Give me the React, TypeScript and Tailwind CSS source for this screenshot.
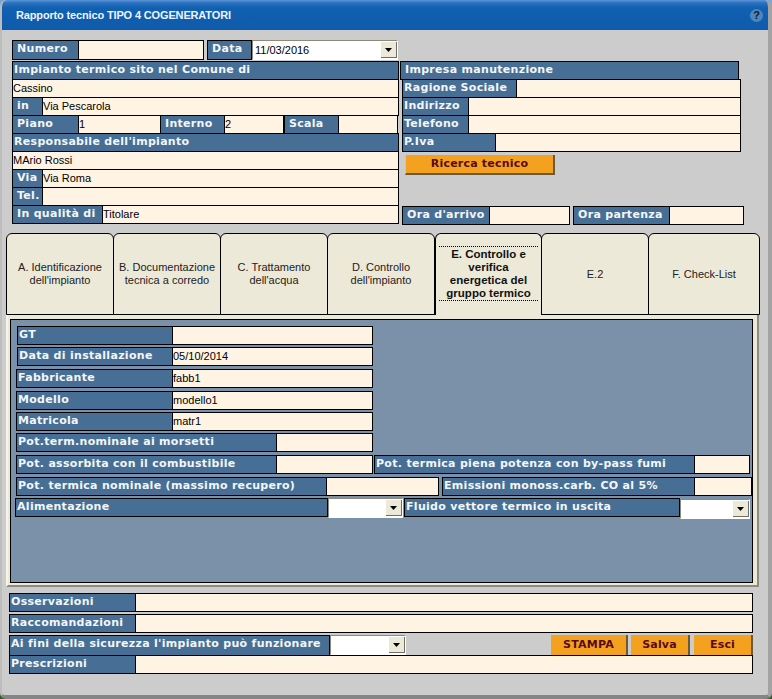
import React from "react";

const LBL = "font-['DejaVu_Sans',sans-serif] font-bold text-[11px] tracking-[0.3px] leading-[14px] text-[#f4f6f8]";

function Label({ w, children, className = "" }: { w?: string; children: React.ReactNode; className?: string }) {
  return (
    <div className={`h-full shrink-0 border border-black bg-[#476f95] pl-px pt-px whitespace-nowrap overflow-hidden ${LBL} ${w ?? ""} ${className}`}>
      {children}
    </div>
  );
}

function Input({ w, children, className = "" }: { w?: string; children?: React.ReactNode; className?: string }) {
  return (
    <div className={`h-full -ml-px border border-black bg-[#fff3e4] flex items-center whitespace-nowrap overflow-hidden font-['Liberation_Sans',sans-serif] text-[11px] text-black ${w ?? "flex-1"} ${className}`}>
      {children}
    </div>
  );
}

function Select({ w, value, className = "" }: { w: string; value?: string; className?: string }) {
  return (
    <div className={`relative shrink-0 h-[20px] border-t border-l border-t-[#8d8a78] border-l-[#8d8a78] border-b border-r border-b-white border-r-white bg-white flex items-center pl-[2px] font-['Liberation_Sans',sans-serif] text-[11px] text-black ${w} ${className}`}>
      {value}
      <div className="absolute right-0 top-px bottom-px w-[16px] bg-[#ece9d8] border-r border-b border-r-[#716f64] border-b-[#716f64] flex items-center justify-center">
        <svg width="7" height="4" viewBox="0 0 7 4"><path d="M0 0h7L3.5 4z" fill="#000" /></svg>
      </div>
    </div>
  );
}

function Btn({ w, children, className = "" }: { w: string; children: React.ReactNode; className?: string }) {
  return (
    <div className={`shrink-0 flex items-center justify-center pt-px bg-[#f3a11f] border-r-2 border-r-[#6b5a3a] font-['DejaVu_Sans',sans-serif] font-bold text-[11px] tracking-[0.2px] text-[#5a0a14] ${w} ${className}`}>
      {children}
    </div>
  );
}

function Row({ children, className = "" }: { children: React.ReactNode; className?: string }) {
  return <div className={`flex h-[19px] ${className}`}>{children}</div>;
}

function Tab({ w, children }: { w: string; children: React.ReactNode }) {
  return (
    <div className={`h-[82px] -mr-px shrink-0 rounded-t-[6px] border border-black bg-[#ece9d8] flex items-center justify-center text-center font-['Liberation_Sans',sans-serif] text-[11px] leading-[13px] text-[#222] ${w}`}>
      <div>{children}</div>
    </div>
  );
}

export default function App() {
  return (
    <div className="w-[772px] h-[699px] overflow-hidden bg-[linear-gradient(to_bottom,#7ba7d8_0,#7ba7d8_50%,#2f5a26_50%,#2f5a26_100%)]">
      <div className="w-[772px] h-[699px] flex flex-col rounded-t-[7px] rounded-b-[6px] overflow-hidden bg-[#cccccc] border-r-[4px] border-r-[#a3a3a3] border-b-[4px] border-b-[#858585] border-l-[2px] border-l-[#bdbdbd]">
        {/* Title bar */}
        <div className="h-[30px] -ml-[2px] -mr-[4px] shrink-0 flex items-center justify-between pl-[16px] pr-[9px] bg-[linear-gradient(to_bottom,#5b94d6_0,#2a72c0_3px,#1160b2_8px,#0f5aab_100%)]">
          <span className="font-['Liberation_Sans',sans-serif] font-bold text-[11px] tracking-[-0.15px] text-[#eef3fa]">Rapporto tecnico TIPO 4 COGENERATORI</span>
          <div className="w-[13px] h-[13px] rounded-full bg-[#4f86bb] flex items-center justify-center font-['Liberation_Sans',sans-serif] font-bold text-[11px] leading-none text-[#0b1a30]">?</div>
        </div>

        {/* Upper form */}
        <div className="pl-[10px] pt-[10px]">
          <Row className="h-[20px]">
            <Label w="w-[67px]" className="!pl-[4px]">Numero</Label>
            <Input w="w-[126px]" />
            <Label w="w-[45px]" className="ml-[3px] !pl-[4px]">Data</Label>
            <Select w="w-[146px]" value="11/03/2016" />
          </Row>
          <div className="flex mt-[1px]">
            <div className="w-[387px] shrink-0">
              <Row><Label w="w-full">Impianto termico sito nel Comune di</Label></Row>
              <Row className="-mt-px"><Input className="ml-0">Cassino</Input></Row>
              <Row className="-mt-px"><Label w="w-[31px]" className="!pl-[4px]">in</Label><Input>Via Pescarola</Input></Row>
              <Row className="-mt-px w-[386px]">
                <Label w="w-[67px]" className="!pl-[4px]">Piano</Label>
                <Input w="w-[83px]">1</Input>
                <Label w="w-[65px]" className="-ml-px !pl-[4px]">Interno</Label>
                <Input w="w-[60px]">2</Input>
                <Label w="w-[55px]" className="!pl-[4px]">Scala</Label>
                <Input w="w-[60px]" />
              </Row>
              <Row className="-mt-px"><Label w="w-full">Responsabile dell'impianto</Label></Row>
              <Row className="-mt-px"><Input className="ml-0">MArio Rossi</Input></Row>
              <Row className="-mt-px"><Label w="w-[31px]" className="!pl-[4px]">Via</Label><Input>Via Roma</Input></Row>
              <Row className="-mt-px"><Label w="w-[31px]" className="!pl-[4px]">Tel.</Label><Input /></Row>
              <Row className="-mt-px"><Label w="w-[91px]" className="!pl-[4px]">In qualità di</Label><Input>Titolare</Input></Row>
            </div>
            <div className="w-[345px] shrink-0 ml-[2px]">
              <Row className="-ml-px"><Label w="w-[339px]" className="!pl-[4px]">Impresa manutenzione</Label></Row>
              <div className="ml-[1px]">
                <Row className="-mt-px w-[339px]"><Label w="w-[115px]">Ragione Sociale</Label><Input /></Row>
                <Row className="-mt-px w-[339px]"><Label w="w-[67px]">Indirizzo</Label><Input /></Row>
                <Row className="-mt-px w-[339px]"><Label w="w-[67px]">Telefono</Label><Input /></Row>
                <Row className="-mt-px w-[339px]"><Label w="w-[94px]">P.Iva</Label><Input /></Row>
                <Btn w="w-[150px] h-[20px] mt-[3px] ml-[3px] border-b-2 border-b-[#6b5a3a] border-l border-l-[#f8c060]">Ricerca tecnico</Btn>
                <Row className="mt-[31px]">
                  <Label w="w-[88px]" className="!pl-[4px]">Ora d'arrivo</Label>
                  <Input w="w-[81px]" />
                  <Label w="w-[97px]" className="ml-[3px] !pl-[4px]">Ora partenza</Label>
                  <Input w="w-[75px]" />
                </Row>
              </div>
            </div>
          </div>
        </div>

        {/* Tabs */}
        <div className="flex ml-[4px] mt-[8px] relative z-10 h-[81px]">
          <Tab w="w-[108px]">A. Identificazione<br />dell'impianto</Tab>
          <Tab w="w-[108px]">B. Documentazione<br />tecnica a corredo</Tab>
          <Tab w="w-[108px]">C. Trattamento<br />dell'acqua</Tab>
          <Tab w="w-[108px]">D. Controllo<br />dell'impianto</Tab>
          <div className="h-[82px] w-[107px] -mr-px ml-[1px] shrink-0 rounded-t-[6px] border border-black border-b-0 bg-[#ece9d8] px-[3px] pt-[12px] text-center font-['Liberation_Sans',sans-serif] font-bold text-[11.5px] leading-[13px] text-[#111]">
            <div className="border-y border-dotted border-black whitespace-nowrap pt-px">E. Controllo e<br />verifica<br />energetica del<br />gruppo termico</div>
          </div>
          <Tab w="w-[108px]">E.2</Tab>
          <Tab w="w-[112px]">F. Check-List</Tab>
        </div>

        {/* Tab panel */}
        <div className="ml-[4px] w-[753px] h-[273px] shrink-0 border-t border-black border-l-2 border-l-[#f6f4ea] border-r-2 border-r-[#8e8c80] border-b-2 border-b-[#8e8c80] bg-[#ece9d8] pl-[2px] pr-[4px] pt-[4px] pb-[2px]">
          <div className="h-full border border-black bg-[#7a91a9] pt-[6px]">
            <Row className="ml-[6px] w-[356px]"><Label w="w-[156px]">GT</Label><Input /></Row>
            <Row className="ml-[6px] mt-[2px] w-[356px]"><Label w="w-[156px]">Data di installazione</Label><Input>05/10/2014</Input></Row>
            <Row className="ml-[5px] mt-[3px] w-[357px]"><Label w="w-[157px]">Fabbricante</Label><Input>fabb1</Input></Row>
            <Row className="ml-[5px] mt-[3px] w-[357px]"><Label w="w-[157px]">Modello</Label><Input>modello1</Input></Row>
            <Row className="ml-[5px] mt-[2px] w-[357px]"><Label w="w-[157px]">Matricola</Label><Input>matr1</Input></Row>
            <Row className="ml-[5px] mt-[2px] w-[357px]"><Label w="w-[261px]">Pot.term.nominale ai morsetti</Label><Input /></Row>
            <Row className="ml-[5px] mt-[3px]">
              <Label w="w-[261px]">Pot. assorbita con il combustibile</Label>
              <Input w="w-[97px]" />
              <Label w="w-[321px]" className="ml-px">Pot. termica piena potenza con by-pass fumi</Label>
              <Input w="w-[56px]" />
            </Row>
            <Row className="ml-[5px] mt-[3px]">
              <Label w="w-[311px]">Pot. termica nominale (massimo recupero)</Label>
              <Input w="w-[113px]" />
              <Label w="w-[253px]" className="ml-[3px]">Emissioni monoss.carb. CO al 5%</Label>
              <Input w="w-[58px]" />
            </Row>
            <div className="flex ml-[4px] mt-[2px] h-[20px]">
              <Label w="w-[313px]" className="!h-[19px]">Alimentazione</Label>
              <Select w="w-[75px]" />
              <Label w="w-[276px]" className="!h-[19px] ml-[1px]">Fluido vettore termico in uscita</Label>
              <Select w="w-[70px]" className="mt-px" />
            </div>
          </div>
        </div>

        {/* Bottom rows */}
        <div className="ml-[7px] w-[744px] mt-[6px]">
          <Row><Label w="w-[127px]">Osservazioni</Label><Input /></Row>
          <Row className="mt-[2px]"><Label w="w-[127px]">Raccomandazioni</Label><Input /></Row>
          <div className="flex mt-[2px] h-[21px] border-b border-black">
            <Label w="w-[321px]" className="border-b-0">Ai fini della sicurezza l'impianto può funzionare</Label>
            <Select w="w-[76px]" />
            <div className="flex-1 flex justify-end">
              <Btn w="w-[77px]">STAMPA</Btn>
              <Btn w="w-[59px] ml-[3px]">Salva</Btn>
              <Btn w="w-[59px] ml-[4px]">Esci</Btn>
            </div>
          </div>
          <Row className="-mt-px"><Label w="w-[127px]">Prescrizioni</Label><Input /></Row>
        </div>
      </div>
    </div>
  );
}
